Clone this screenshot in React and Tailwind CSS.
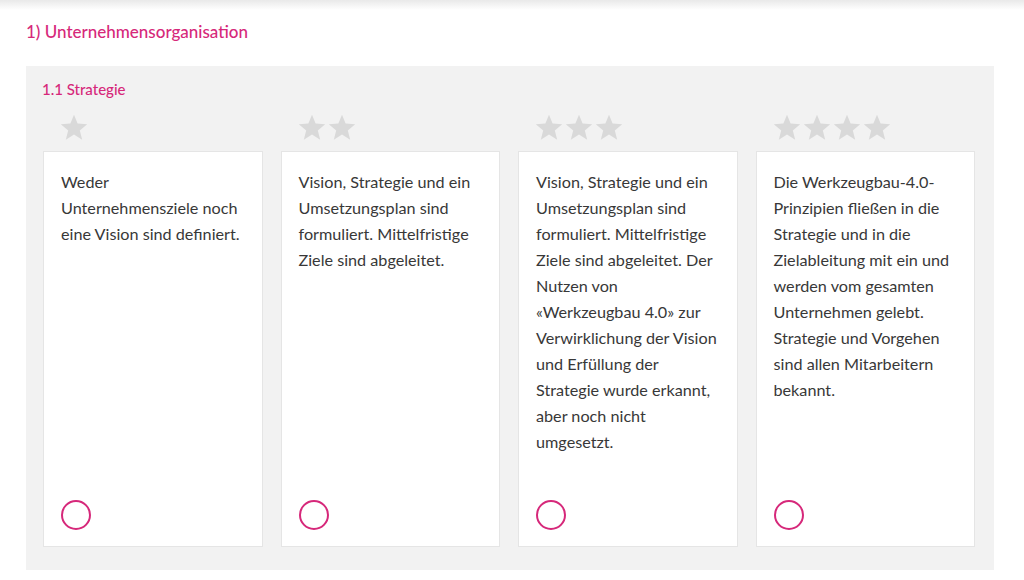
const levels = [
  {
    stars: 1,
    text: 'Weder Unternehmensziele noch eine Vision sind definiert.',
  },
  {
    stars: 2,
    text: 'Vision, Strategie und ein Umsetzungsplan sind formuliert. Mittelfristige Ziele sind abgeleitet.',
  },
  {
    stars: 3,
    text: 'Vision, Strategie und ein Umsetzungsplan sind formuliert. Mittelfristige Ziele sind abgeleitet. Der Nutzen von «Werkzeugbau 4.0» zur Verwirklichung der Vision und Erfüllung der Strategie wurde erkannt, aber noch nicht umgesetzt.',
  },
  {
    stars: 4,
    text: 'Die Werkzeugbau-4.0-Prinzipien fließen in die Strategie und in die Zielableitung mit ein und werden vom gesamten Unternehmen gelebt. Strategie und Vorgehen sind allen Mitarbeitern bekannt.',
  },
];

function Star() {
  return (
    <svg width="28" height="27" viewBox="0 0 24 23" className="shrink-0">
      <path
        d="M12 0.5l3.1 7.6 8.2 0.6-6.3 5.3 2 8-7-4.4-7 4.4 2-8L0.7 8.7l8.2-0.6z"
        fill="#d9d9d9"
      />
    </svg>
  );
}

function LevelCard({ level }) {
  return (
    <div className="flex flex-col">
      <div className="flex h-[41px] items-start gap-[2px] pl-[17px] pt-[16px]">
        {Array.from({ length: level.stars }).map((_, i) => (
          <Star key={i} />
        ))}
      </div>
      <div className="mt-[12px] flex h-[396px] flex-col justify-between border border-[#e5e5e5] bg-white px-[17px] pt-[17px] pb-[16px]">
        <p className="text-[16.2px] leading-[26px] text-[#383838]">{level.text}</p>
        <div className="h-[30px] w-[30px] rounded-full border-2 border-[#d6287a]" />
      </div>
    </div>
  );
}

export default function App() {
  return (
    <div
      className="min-h-[580px] bg-white"
      style={{ fontFamily: 'Lato, "Open Sans", sans-serif' }}
    >
      <div className="h-[10px] bg-gradient-to-b from-[#e9e9e9] to-white" />
      <div className="px-[26px] pt-[10px] pr-[30px]">
        <h1 className="text-[17px] leading-[24px] font-medium text-[#d6287a]">
          1) Unternehmensorganisation
        </h1>
        <div className="mt-[22px] bg-[#f2f2f2] pt-[14px] pr-[19px] pb-[23px] pl-[16px]">
          <h2 className="text-[15px] leading-[18px] font-medium text-[#d6287a]">
            1.1 Strategie
          </h2>
          <div className="grid grid-cols-4 gap-[18px] pl-[1px]">
            {levels.map((l) => (
              <LevelCard key={l.stars} level={l} />
            ))}
          </div>
        </div>
      </div>
    </div>
  );
}
